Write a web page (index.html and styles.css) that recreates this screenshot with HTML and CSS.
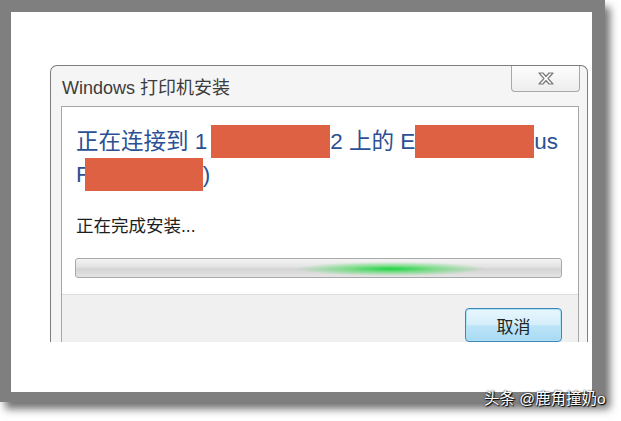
FILE: index.html
```html
<!DOCTYPE HTML>
<html>
<head>
    <meta charset="UTF-8">
    <title>Windows 打印机安装</title>
    <link rel="stylesheet" href="styles.css">
</head>
<body>
    <div class="frame">
        <div class="screen">
            <div class="dialog">
                <div class="titlebar">
                    <p class="title">Windows 打印机安装</p>
                    <div class="close">
                        <svg width="16" height="13" viewBox="0 0 16 13">
                            <polygon points="1,1 5,1 8,4.5 11,1 15,1 10,6.5 15,12 11,12 8,8.5 5,12 1,12 6,6.5" fill="#fff" stroke="#7a7a7a" stroke-width="1.2" stroke-linejoin="round"/>
                        </svg>
                    </div>
                </div>
                <div class="panel">
                    <div class="content">
                        <h1 class="heading">
                            <span class="line">正在连接到 1<span class="mask m1"></span>2 上的 E<span class="mask m2"></span>us</span>
                            <span class="line">F<span class="mask m3"></span>)</span>
                        </h1>
                        <p class="status">正在完成安装...</p>
                        <div class="bar"></div>
                    </div>
                    <div class="footer">
                        <button class="btn">取消</button>
                    </div>
                </div>
            </div>
        </div>
    </div>
    <p class="mark">头条 @鹿角撞奶o</p>
</body>
</html>
```

FILE: styles.css
```css
html,body{margin:0;padding:0;}
body{
    position: relative;
    width: 621px;
    height: 421px;
    overflow: hidden;
    background: #fff;
    font-family: "Liberation Sans","Noto Sans CJK SC",sans-serif;
}
p,h1{margin:0;}

.frame{
    width: 605px;
    height: 402px;
    box-sizing: border-box;
    padding: 12px 13px 10px 11px;
    background: #7f7f7f;
    box-shadow: 5px 7px 8px rgba(0,0,0,.55);
}
.screen{
    height: 100%;
    box-sizing: border-box;
    padding: 53px 0 0 39px;
    background: #fff;
    overflow: hidden;
}

.dialog{
    display: flex;
    flex-direction: column;
    width: 538px;
    height: 277px;
    box-sizing: border-box;
    padding: 0 8px 0 10px;
    border: 1px solid #7d7d7d;
    border-bottom: 0;
    border-radius: 7px 7px 0 0;
    background: #f5f5f5;
}
.titlebar{
    display: flex;
    justify-content: space-between;
    align-items: flex-start;
    height: 41px;
}
.title{
    margin-top: 12px;
    padding-left: 1px;
    font-size: 18px;
    line-height: 20px;
    color: #3c3c3c;
}
.close{
    display: flex;
    align-items: center;
    justify-content: center;
    width: 69px;
    height: 26px;
    box-sizing: border-box;
    margin-right: -1px;
    border: 1px solid #a8a8a8;
    border-top: 0;
    border-radius: 0 0 4px 4px;
    background: linear-gradient(#fdfdfd,#ededed);
}

.panel{
    display: flex;
    flex-direction: column;
    flex: 1;
    border: 1px solid #a5a5a5;
    border-bottom: 0;
}
.content{
    padding: 18px 16px 16px 14px;
    background: #fff;
}
.heading{
    font-size: 22.5px;
    font-weight: normal;
    line-height: 30px;
    color: #2b5093;
}
.heading .line{
    display: block;
    white-space: nowrap;
}
.mask{
    display: inline-block;
    width: 119px;
    height: 33px;
    vertical-align: -9px;
    background: #de6143;
}
.m1{margin-left: 4px;}
.m3{width: 118px;margin-left: -5px;}
.status{
    margin-top: 23px;
    font-size: 17.5px;
    line-height: 24px;
    color: #1e1e1e;
}
.bar{
    height: 20px;
    box-sizing: border-box;
    margin: 20px 0 0 -1px;
    border: 1px solid #a9a9a9;
    border-radius: 3px;
    background:
        radial-gradient(ellipse 95px 7px at 315px 55%, #1fd444, rgba(70,220,90,.6) 45%, rgba(160,230,170,0) 100%),
        linear-gradient(#f4f4f4,#e2e2e2 45%,#d4d4d4 55%,#e4e4e4);
}

.footer{
    display: flex;
    flex: 1;
    justify-content: flex-end;
    align-items: flex-start;
    padding: 13px 16px 0 0;
    border-top: 1px solid #dedede;
    background: #f0f0f0;
}
.btn{
    width: 97px;
    height: 34px;
    padding: 0;
    border: 1px solid #3f86b4;
    border-radius: 4px;
    background: linear-gradient(#e8f6fd,#d6eefb 48%,#bde5f9 52%,#a8daf3);
    box-shadow: inset 0 0 0 1px #aee2f6;
    font-family: "Liberation Sans","Noto Sans CJK SC",sans-serif;
    font-size: 17px;
    color: #222;
}

.mark{
    position: absolute;
    left: 484px;
    top: 390px;
    font-size: 15.5px;
    line-height: 18px;
    color: #fff;
    text-shadow: 0 0 2px #000, 1px 1px 1px #000;
}
```
